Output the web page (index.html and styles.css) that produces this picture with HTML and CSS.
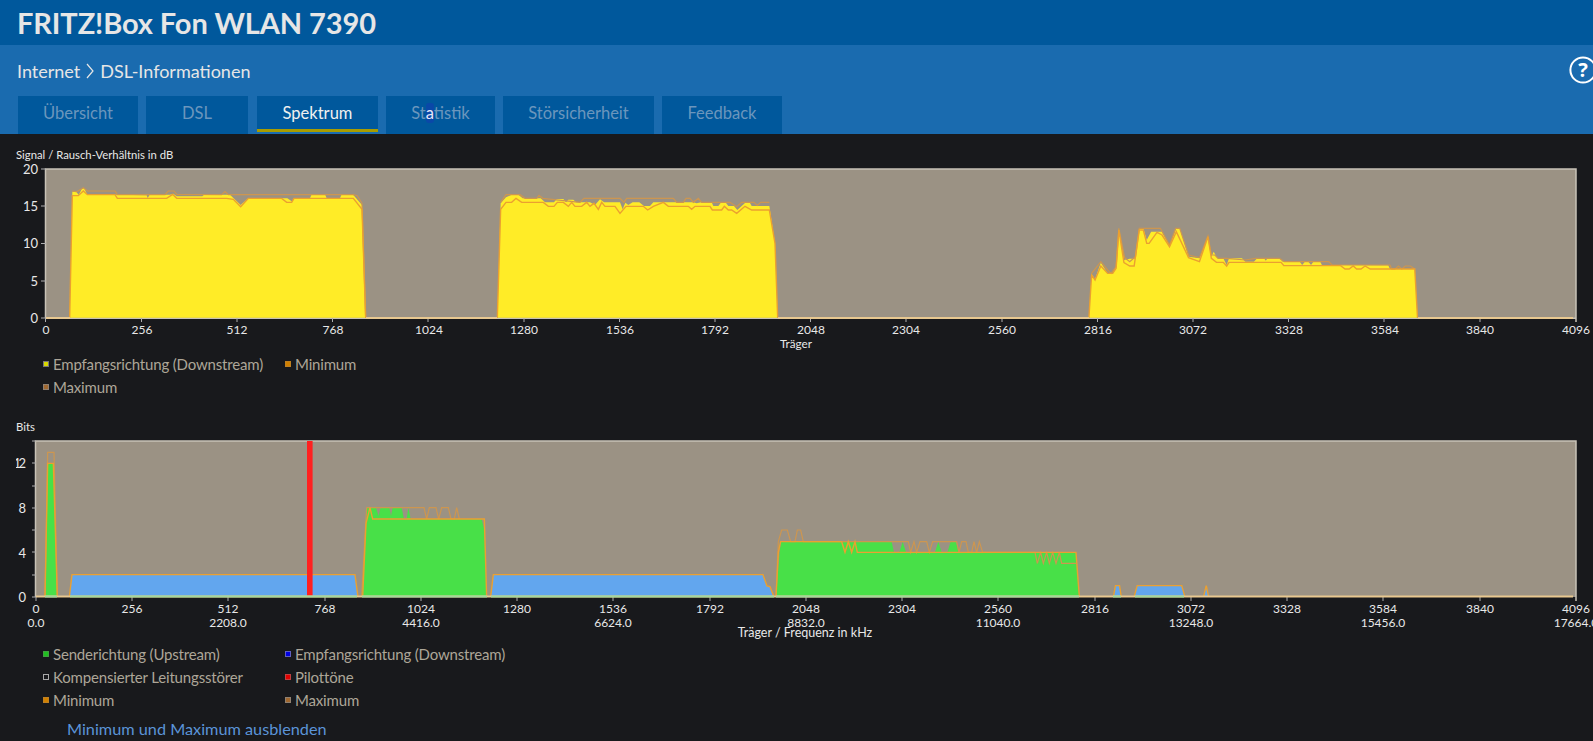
FILE: index.html
```html
<!DOCTYPE html>
<html lang="de">
<head>
<meta charset="utf-8">
<title>FRITZ!Box Fon WLAN 7390</title>
<link rel="stylesheet" href="styles.css">
</head>
<body>
<header class="top"><h1 class="brand">FRITZ!Box Fon WLAN 7390</h1></header>
<div class="sub">
  <nav class="crumbs">
    <span>Internet</span>
    <svg class="chev" width="8" height="16" viewBox="0 0 8 16"><polyline points="1,1 7,8 1,15"/></svg>
    <span>DSL-Informationen</span>
  </nav>
  <svg class="help" width="28" height="28" viewBox="0 0 28 28"><circle cx="14" cy="14" r="12.6"/><text x="14" y="21" text-anchor="middle">?</text></svg>
  <div class="tabs">
    <a class="tab t1">Übersicht</a>
    <a class="tab t2">DSL</a>
    <a class="tab t3 active">Spektrum</a>
    <a class="tab t4">St<span class="hl">a</span>tistik</a>
    <a class="tab t5">Störsicherheit</a>
    <a class="tab t6">Feedback</a>
  </div>
</div>
<main class="main">
  <section class="chart">
    <div class="ctitle">Signal / Rausch-Verhältnis in dB</div>
    <svg class="plot" width="1593" height="190" viewBox="0 162 1593 190">
      <rect class="bg" x="46" y="169" width="1530" height="149"/>
      <path class="frame" d="M45.5 318V169H1576V322M45.5 318.300H1576"/>
      <path class="tick" d="M41 169H46M41 206H46M41 243.5H46M41 281H46M41 318H46M45.5 318V322M141.5 318V322M237 318V322M332.5 318V322M428 318V322M524 318V322M619.500 318V322M715 318V322M810.500 318V322M906 318V322M1002 318V322M1097.500 318V322M1193 318V322M1288.500 318V322M1384 318V322M1480 318V322"/>

      <g transform="translate(0,160) scale(.33333)">
        <polygon class="sig" points="209,473 217,95 230,97 236,105 245,88 252,84 262,104 345,104 352,104 440,106 443,114 449,104 500,104 510,104 520,101 530,109 607,109 612,104 690,104 722,135 745,115 850,115 862,115 875,124 882,115 930,115 935,103 975,103 980,115 1020,115 1025,103 1058,103 1086,135 1087,150 1097,473"/>
        <polyline class="max" points="217,93 230,95 250,83 262,93 345,93 352,104 495,104 505,93 522,93 530,103 665,104 675,95 685,104 1060,104 1072,107 1086,130 1097,473"/>
        <polyline class="min" points="209,473 217,107 235,107 250,93 262,104 345,104 352,115 500,115 518,103 530,115 680,115 700,118 722,140 745,115 845,115 860,127 875,127 882,115 1060,115 1086,148 1097,473"/>
      </g>
      <g transform="translate(480,160) scale(.33333)">
        <polygon class="sig" points="52,473 62,130 78,112 95,104 115,104 128,115 182,115 195,127 222,127 230,117 250,117 258,127 265,119 280,119 288,127 330,127 345,135 360,118 372,127 420,127 428,148 436,128 445,135 458,127 478,127 492,138 510,138 520,127 640,127 650,130 664,127 695,127 700,138 715,138 722,129 738,129 745,138 762,138 772,150 795,129 810,129 815,138 868,138 885,250 893,473"/>
        <polyline class="max" points="62,127 78,104 120,104 135,115 170,115 177,106 188,115 300,127 312,115 420,115 432,127 440,115 555,115 570,115 580,115 590,127 610,127 618,115 630,115 640,127 655,115 665,127 750,127 770,140 785,127 822,127 832,136 842,127 868,127"/>
        <polyline class="min" points="52,473 62,148 78,127 95,127 108,115 125,127 190,127 205,139 222,139 232,127 250,127 265,139 275,127 285,139 305,139 320,127 330,139 342,130 355,148 365,127 375,139 405,139 420,160 438,139 490,139 503,150 520,139 550,127 565,139 625,139 635,148 645,139 690,139 697,150 725,150 733,139 745,150 755,150 770,160 795,139 815,150 868,150 885,250 893,473"/>
      </g>
      <g transform="translate(1060,160) scale(.34014,.33333)">
        <polygon class="sig" points="85,473 93,342 103,358 120,308 140,340 155,340 165,320 173,205 188,300 205,296 220,296 233,205 245,205 255,240 268,215 300,215 322,258 342,205 352,205 378,290 410,295 435,230 445,290 452,275 462,295 480,295 490,315 497,295 535,295 545,305 570,305 580,295 600,295 605,302 610,295 645,295 655,305 705,305 712,315 720,305 730,305 738,315 745,305 765,305 770,315 830,315 935,316 965,316 970,327 1043,327 1051,473"/>
        <polyline class="max" points="93,340 120,305 140,330 150,340 165,320 173,205 190,293 205,305 222,290 233,205 295,205 322,255 340,205 352,205 378,285 410,293 435,228 445,285 455,285 465,295 490,295 545,300 575,295 645,295 660,305 790,305 800,315 970,315 975,327 985,327 995,318 1005,327 1015,318 1030,318 1043,327"/>
        <polyline class="min" points="85,473 93,345 103,360 120,318 140,340 155,340 165,325 173,210 188,308 205,318 218,318 233,210 245,210 255,250 262,250 285,217 300,225 322,260 342,215 378,293 410,305 435,230 445,295 460,307 480,307 490,318 497,307 650,307 658,317 825,317 838,327 850,327 862,318 872,327 885,327 897,318 912,327 1043,327 1051,473"/>
      </g>
      <path class="base" d="M46 317.900H70M366 317.900H497M778 317.900H1089M1418 317.900H1573"/>

      <g class="ylab" text-anchor="end">
        <text x="38" y="174">20</text>
        <text x="38" y="211">15</text>
        <text x="38" y="248">10</text>
        <text x="38" y="286">5</text>
        <text x="38" y="323">0</text>
      </g>
      <g class="xlab" text-anchor="middle">
        <text x="46" y="334">0</text>
        <text x="142" y="334">256</text>
        <text x="237" y="334">512</text>
        <text x="333" y="334">768</text>
        <text x="429" y="334">1024</text>
        <text x="524" y="334">1280</text>
        <text x="620" y="334">1536</text>
        <text x="715" y="334">1792</text>
        <text x="811" y="334">2048</text>
        <text x="906" y="334">2304</text>
        <text x="1002" y="334">2560</text>
        <text x="1098" y="334">2816</text>
        <text x="1193" y="334">3072</text>
        <text x="1289" y="334">3328</text>
        <text x="1385" y="334">3584</text>
        <text x="1480" y="334">3840</text>
        <text x="1576" y="334">4096</text>
      </g>
      <text class="axis" x="796" y="348" text-anchor="middle">Träger</text>
    </svg>
    <div class="legend legend-top">
      <div class="item"><i class="sw sw-yellow"></i>Empfangsrichtung (Downstream)</div>
      <div class="item"><i class="sw sw-min"></i>Minimum</div>
      <div class="item"><i class="sw sw-max"></i>Maximum</div>
    </div>
  </section>

  <section class="chart second">
    <div class="ctitle">Bits</div>
    <svg class="plot" width="1593" height="207" viewBox="0 434 1593 207">
      <defs><clipPath id="ylabclip"><rect x="16" y="434" width="30" height="180"/></clipPath></defs>
      <rect class="bg" x="36" y="441" width="1540" height="156"/>
      <path class="frame" d="M35.500 597V441H1576V601"/>
      <path class="tick" d="M32 441H36M32 463H36M32 486H36M32 508H36M32 530H36M32 552H36M32 575H36M32 597H36M36 597V601M132 597V601M228 597V601M325 597V601M421 597V601M517 597V601M613 597V601M710 597V601M806 597V601M902 597V601M998 597V601M1095 597V601M1191 597V601M1287 597V601M1383 597V601M1480 597V601"/>

      <g transform="translate(0,420) scale(.33333)">
        <polygon class="up" points="135,531 143,130 160,130 172,531"/>
        <polyline class="max" points="135,531 143,97 162,97 172,531"/>
        <polyline class="min" points="135,531 143,130 160,130 172,531"/>
        <polygon class="down" points="208,531 216,464 1065,464 1074,531"/>
        <polyline class="min" points="208,531 216,464 1065,464 1074,531"/>
      </g>
      <g transform="translate(340,480) scale(.33333)">
        <polygon class="up" points="65,350 80,83 108,83 116,108 122,83 148,83 153,108 158,83 185,83 192,117 200,117 205,83 212,117 425,117 433,150 440,350"/>
        <polyline class="max" points="65,350 80,83 252,83 260,117 268,83 288,83 296,117 305,83 325,83 333,117 343,117 350,83 358,117"/>
        <polyline class="min" points="68,350 78,130 90,83 98,117 425,117 433,117 440,350"/>
        <polygon class="down" points="452,350 460,284 1269,284 1281,318 1290,320 1302,350"/>
        <polyline class="min" points="452,350 460,284 1269,284 1281,318 1290,320 1302,350"/>
      </g>
      <g transform="translate(760,510) scale(.33333)">
        <polygon class="up" points="48,260 62,95 395,95 402,127 418,127 428,95 438,127 525,127 535,95 545,127 562,127 572,95 588,95 595,127 948,127 958,260"/>
        <polyline class="max" points="48,260 55,95 65,60 82,60 92,95 105,95 112,60 122,60 130,95 445,95 452,127 462,95 470,127 480,95 500,95 508,127 518,95 590,95 597,127 605,95 618,95 625,127 635,127 642,95 650,127 658,95 668,127 825,127 832,160 842,127 850,160 860,127 868,160 878,127 888,160 898,127 905,160 948,160"/>
        <polyline class="min" points="48,260 55,127 62,95 245,95 255,127 265,95 275,127 285,95 292,127 948,127 958,260"/>
      </g>
      <g transform="translate(1060,540) scale(.34014,.33333)">
        <polygon class="down" points="157,170 163,137 175,137 180,170"/>
        <polygon class="down" points="218,170 227,137 358,137 367,170"/>
        <polygon class="down" points="422,170 430,137 437,170"/>
        <polyline class="min" points="157,170 163,137 175,137 180,170"/>
        <polyline class="min" points="218,170 227,137 358,137 367,170"/>
        <polyline class="min" points="422,170 430,137 437,170"/>
      </g>
      <rect class="pilot" x="307" y="441" width="5.600" height="155.500"/>
      <path class="base" d="M36 596.500H1573"/>
      <path class="basegreen" d="M45 596.500H57M70 596.500H357M362 596.500H487M491 596.500H774M776 596.500H1079M1113 596.500H1121M1135 596.500H1184"/>

      <g class="ylab" text-anchor="end" clip-path="url(#ylabclip)">
        <text class="tight" x="23.500" y="468">12</text>
        <text x="26" y="513">8</text>
        <text x="26" y="558">4</text>
        <text x="26" y="602">0</text>
      </g>
      <g class="xlab" text-anchor="middle">
        <text x="36" y="613">0</text>
        <text x="132" y="613">256</text>
        <text x="228" y="613">512</text>
        <text x="325" y="613">768</text>
        <text x="421" y="613">1024</text>
        <text x="517" y="613">1280</text>
        <text x="613" y="613">1536</text>
        <text x="710" y="613">1792</text>
        <text x="806" y="613">2048</text>
        <text x="902" y="613">2304</text>
        <text x="998" y="613">2560</text>
        <text x="1095" y="613">2816</text>
        <text x="1191" y="613">3072</text>
        <text x="1287" y="613">3328</text>
        <text x="1383" y="613">3584</text>
        <text x="1480" y="613">3840</text>
        <text x="1576" y="613">4096</text>
        <text x="36" y="627">0.0</text>
        <text x="228" y="627">2208.0</text>
        <text x="421" y="627">4416.0</text>
        <text x="613" y="627">6624.0</text>
        <text x="806" y="627">8832.0</text>
        <text x="998" y="627">11040.0</text>
        <text x="1191" y="627">13248.0</text>
        <text x="1383" y="627">15456.0</text>
        <text x="1576" y="627">17664.0</text>
      </g>
      <text class="axis axis-long" x="805" y="637" text-anchor="middle">Träger / Frequenz in kHz</text>
    </svg>
    <div class="legend">
      <div class="item"><i class="sw sw-green"></i>Senderichtung (Upstream)</div>
      <div class="item"><i class="sw sw-blue"></i>Empfangsrichtung (Downstream)</div>
      <div class="item"><i class="sw sw-hollow"></i>Kompensierter Leitungsstörer</div>
      <div class="item"><i class="sw sw-red"></i>Pilottöne</div>
      <div class="item"><i class="sw sw-min"></i>Minimum</div>
      <div class="item"><i class="sw sw-max"></i>Maximum</div>
    </div>
    <a class="toggle">Minimum und Maximum ausblenden</a>
  </section>
</main>
</body>
</html>
```
FILE: styles.css
```css
* { box-sizing: border-box; }
html, body { margin: 0; padding: 0; height: 741px; overflow: hidden; }
body {
  background: #18191c;
  font-family: "Lato", "Noto Sans", sans-serif;
  color: #e8e8e8;
}
.top {
  height: 45px;
  background: #00589c;
  padding-left: 17px;
  display: flex;
  align-items: center;
}
.brand {
  margin: 0;
  font-size: 29px;
  font-weight: 700;
  letter-spacing: -0.1px;
  color: #e6e6e6;
  line-height: 45px;
  white-space: nowrap;
}
.sub {
  position: relative;
  height: 89px;
  background: #1a6baf;
  padding: 17px 0 0 17px;
}
.crumbs {
  display: flex;
  align-items: center;
  gap: 6px;
  height: 18px;
  font-size: 18px;
  color: #e6e6e6;
  white-space: nowrap;
}
.chev polyline { fill: none; stroke: #e6e6e6; stroke-width: 1.2; }
.help { position: absolute; right: -4px; top: 11px; }
.help circle { fill: none; stroke: #fff; stroke-width: 2; }
.help text { font: 700 20px "Noto Sans", sans-serif; fill: #fff; }
.tabs {
  display: flex;
  gap: 8px;
  margin: 16px 0 0 1px;
}
.tab {
  height: 38px;
  background: #00589c;
  color: #6b96bd;
  font-size: 16.500px;
  line-height: 34px;
  text-align: center;
  white-space: nowrap;
}
.t1 { width: 120px; }
.t2 { width: 102px; margin-right: 1px; }
.t3 { width: 121px; }
.t4 { width: 109px; }
.t5 { width: 151px; }
.t6 { width: 120px; }
.tab.active {
  color: #f0f0f0;
  border-bottom: 3px solid #a89c00;
  height: 36px;
}
.hl { color: #e8e8f8; background: #0a48a8; border-radius: 3px; }
.main { padding-top: 14px; }
.ctitle {
  height: 14px;
  padding-left: 16px;
  font-size: 11.300px;
  line-height: 14px;
  color: #e8e8e8;
}
.plot { display: block; }
.second { margin-top: 22px; }
.bg { fill: #9b9284; }
.frame { fill: none; stroke: #c8c2b6; stroke-width: 1.500; }
.tick { fill: none; stroke: #aeaeae; stroke-width: 1; }
.sig { fill: #ffec27; }
.up { fill: #48e048; }
.down { fill: #62a6ee; }
.pilot { fill: #ff2020; }
.min, .max { fill: none; vector-effect: non-scaling-stroke; }
.min { stroke: #eba030; stroke-width: 1.400; }
.max { stroke: #cd9650; stroke-width: 1.200; }
.base { fill: none; stroke: #e8c890; stroke-width: 2; }
.basegreen { fill: none; stroke: #a2d89c; stroke-width: 2; }
.ylab text { font-size: 13px; fill: #e8e8e8; }
.ylab .tight { letter-spacing: -2.500px; }
.xlab text { font-size: 12px; fill: #e8e8e8; }
.axis { font-size: 11.700px; fill: #e8e8e8; }
.axis-long { font-size: 12.500px; }
.legend {
  display: grid;
  grid-template-columns: 242px auto;
  justify-content: start;
  padding: 1px 0 0 43px;
}
.legend-top { padding-top: 0; }
.item {
  display: flex;
  align-items: center;
  gap: 4px;
  height: 23px;
  font-size: 15px;
  letter-spacing: -0.170px;
  color: #ada698;
  white-space: nowrap;
}
.sw { display: block; width: 6px; height: 6px; border: 1px solid #777; }
.sw-yellow { background: #d8d800; }
.sw-min { background: #d08000; border-color: #c08020; }
.sw-max { background: #a06830; border-color: #908070; }
.sw-green { background: #20c020; border-color: #40a040; }
.sw-blue { background: #0000e0; border-color: #6060c0; }
.sw-hollow { background: transparent; border-color: #a8a8a8; }
.sw-red { background: #e00000; border-color: #c04040; }
.toggle {
  display: block;
  margin: 8px 0 0 67px;
  font-size: 16.250px;
  line-height: 20px;
  color: #5b94d8;
  white-space: nowrap;
}
```
